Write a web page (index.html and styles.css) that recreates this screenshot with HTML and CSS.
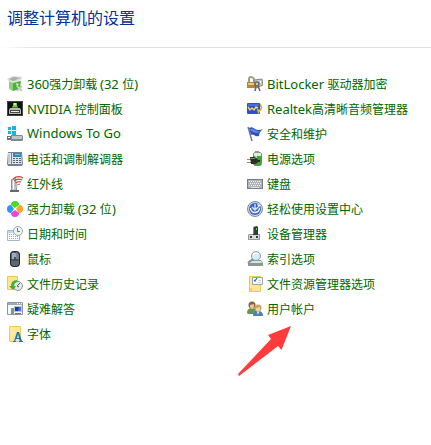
FILE: index.html
```html
<!DOCTYPE html>
<html lang="zh-CN">
<head>
    <meta charset="UTF-8">
    <meta name="viewport" content="width=device-width, initial-scale=1.0">
    <title>调整计算机的设置</title>
    <link rel="stylesheet" href="styles.css">
</head>
<body>
    <header class="page-header">
        <h1>调整计算机的设置</h1>
    </header>

    <main class="settings">
        <ul class="settings-list">
            <li><a href="#">
                <svg class="icon" viewBox="0 0 16 16"><path d="M0 3l6-3 9 1-1 3-9 2z" fill="#d3d9d0"/><path d="M2 3l5-2 6 1-7 3z" fill="#a3b59c"/><path d="M2 5l12-1-1 9-7 2-4-3z" fill="#4cb13a"/><path d="M2 5l4 1v9l-4-3z" fill="#8dcf7b"/><path d="M0 3l6 2 8-2v2L6 7 1 5z" fill="#dfe5dc"/><path d="M9 7l3 1-2 3z" fill="#d7f2cd"/><path d="M10 10l5 5m0-5l-5 5" stroke="#c3ccc1" stroke-width="2"/></svg>
                <span><span class="latin">360</span>强力卸载 <span class="latin">(32 </span>位<span class="latin">)</span></span>
            </a></li>
            <li><a href="#">
                <svg class="icon" viewBox="0 0 16 16"><path d="M0 0h16v15H0z" fill="#111"/><path d="M.5.5h15v14H.5z" fill="none" stroke="#454b43"/><path d="M3 7h10l1 2v4H2V9z" fill="#b5bab3"/><path d="M3 9h10v3H3z" fill="#424a41"/><path d="M4 10h8v1H4z" fill="#e9ece8"/><path d="M5 5h6v2H5z" fill="#3c7f20"/><path d="M6 2h4v4H6z" fill="#6fd335"/><path d="M7 2h2v2H7z" fill="#c7f5a6"/></svg>
                <span><span class="latin">NVIDIA </span>控制面板</span>
            </a></li>
            <li><a href="#">
                <svg class="icon" viewBox="0 0 16 16"><path d="M1 1h3v3H1zM5 0h4v4H5zM1 5h3v3H1zM5 5h4v4H5z" fill="#14b4ee"/><path d="M0 10h4v4H0z" fill="#687175"/><path d="M1 11h2v1H1z" fill="#fff"/><path d="M4 9h11l1 1v4l-1 1H4z" fill="#81898d"/><path d="M5 10h10v3H5z" fill="#bdc4c7"/></svg>
                <span class="latin">Windows To Go</span>
            </a></li>
            <li><a href="#">
                <svg class="icon" viewBox="0 0 16 16"><path d="M1 1h14l1 12-1 2H1l-1-2z" fill="#77838c"/><path d="M1 2h3v11H1z" fill="#e0e6e9"/><path d="M2 3v9" stroke="#a0abb3"/><path d="M5 2h9l1 11H5z" fill="#dce3e8"/><path d="M6 2h8v4H6z" fill="#3284b9"/><path d="M8 3h5v1H8z" fill="#77c5e8"/><path d="M6 7.500h8M6 9.500h8M6 11.500h8" stroke="#59646d" stroke-dasharray="2 1"/></svg>
                <span>电话和调制解调器</span>
            </a></li>
            <li><a href="#">
                <svg class="icon" viewBox="0 0 16 16"><path d="M4.500 3.500l4-1 1 12h-5z" fill="#c6cbce" stroke="#8a9195"/><path d="M6 4h1v9H6z" fill="#fff"/><path d="M3 14h9v2H3z" fill="#626a6e"/><path d="M6 3q5-4 10-1M7 5q4-3 8-1M9 7q2-2 5-1" fill="none" stroke="#c04746" stroke-width="1.2"/><path d="M10 9l3-1" stroke="#d35f5d"/></svg>
                <span>红外线</span>
            </a></li>
            <li><a href="#">
                <svg class="icon" viewBox="0 0 16 16"><path d="M8 7L4 4Q4 0 8 0t4 4z" fill="#45dc22"/><path d="M9 8l3-4q4 0 4 4t-4 4z" fill="#ffa326"/><path d="M8 9l4 3q0 4-4 4t-4-4z" fill="#ee42dc"/><path d="M7 8l-3 4q-4 0-4-4t4-4z" fill="#2599f4"/></svg>
                <span>强力卸载 <span class="latin">(32 </span>位<span class="latin">)</span></span>
            </a></li>
            <li><a href="#">
                <svg class="icon" viewBox="0 0 16 16"><path d="M.5 4.500h12v10H.5z" fill="#f7fbfc" stroke="#a7b9c1"/><path d="M1 5h11v2H1z" fill="#b5dcea"/><path d="M2 8.500h9M2 10.500h9M2 12.500h9" stroke="#8fb2bf" stroke-dasharray="1 1"/><circle cx="11" cy="5" r="4.500" fill="#edf3f5" stroke="#9ba9b0"/><path d="M10.500 2v3.500H13" fill="none" stroke="#607b88"/></svg>
                <span>日期和时间</span>
            </a></li>
            <li><a href="#">
                <svg class="icon" viewBox="0 0 16 16"><rect x="3" y="0" width="10" height="16" rx="4" fill="#20262e"/><rect x="4" y="1" width="8" height="14" rx="3" fill="#5e6875"/><path d="M5 2h2v6H5z" fill="#a4adb7"/><path d="M9 1q3 1 3 7H9z" fill="#7d8793"/><path d="M4 9h8M8 1v8" stroke="#343d48"/><path d="M8 2v4" stroke="#85aedb" stroke-width="2"/></svg>
                <span>鼠标</span>
            </a></li>
            <li><a href="#">
                <svg class="icon" viewBox="0 0 16 16"><path d="M.5.5h10v13H.5z" fill="#ffe493" stroke="#edc95d"/><circle cx="11" cy="10" r="4.500" fill="#e2e7e7" stroke="#8c9696"/><path d="M10 10l3-3M10 10l2 1" stroke="#53615f"/><path d="M10 4Q4 4 4 10H2l4 4 3-4H7q0-4 3-4z" fill="#43b52b"/></svg>
                <span>文件历史记录</span>
            </a></li>
            <li><a href="#">
                <svg class="icon" viewBox="0 0 16 16"><path d="M.5 1.500h15v12H.5z" fill="#f5f7f8" stroke="#8e979d"/><path d="M1 2h14v2H1z" fill="#a0abb6"/><path d="M10 2h1v1h-1zM12 2h1v1h-1zM14 2h1v1h-1z" fill="#fff"/><path d="M4 7h3v6H4z" fill="#8b949b"/><path d="M5 8h1v2H5z" fill="#4ebc41"/><path d="M7 5h8v6H7z" fill="#bbc5d7"/><path d="M8 6h6v4H8z" fill="#1732bf"/><path d="M12 6h2v4h-3z" fill="#4b72df"/><path d="M8 12.500h6" stroke="#65717e"/></svg>
                <span>疑难解答</span>
            </a></li>
            <li><a href="#">
                <svg class="icon" viewBox="0 0 16 16"><path d="M2.500.5h11v15h-11z" fill="#ffe79b" stroke="#f2ca51"/><path d="M10 6h2l3 9h1v1h-4v-1h1l-1-2H9l-1 2h1v1H6v-1h1zm1 2l-1 4h2z" fill="#1777b5"/></svg>
                <span>字体</span>
            </a></li>
        </ul>

        <ul class="settings-list">
            <li><a href="#">
                <svg class="icon" viewBox="0 0 16 16"><path d="M2 7V3q0-2 2-2t3 2v4" fill="none" stroke="#a59b82" stroke-width="2"/><path d="M7 4l8-1 1 6-7 3z" fill="#c5c9c7" stroke="#858a86"/><path d="M0 6h8v6H0z" fill="#b48830"/><path d="M1 7h6v2H1z" fill="#e8c87d"/><circle cx="10" cy="8" r="2" fill="none" stroke="#6e6758" stroke-width="1.4"/><path d="M9 10l-1 5M11 10l2 5" stroke="#746b56" stroke-width="1.6"/><path d="M13 5h1v2h-1z" fill="#fff"/></svg>
                <span><span class="latin">BitLocker </span>驱动器加密</span>
            </a></li>
            <li><a href="#">
                <svg class="icon" viewBox="0 0 16 16"><path d="M12 2q4 1 3 6l-3 4z" fill="#f2cd79"/><path d="M13 3q3 3 0 7" fill="none" stroke="#c99843"/><rect y="2" width="13" height="11" rx="1" fill="#2c4fca"/><path d="M1 3h11v2H1z" fill="#4c6dd8"/><path d="M1 6l2 3 2-2 2 2 2-3 2 1" fill="none" stroke="#f0d957" stroke-width="1.400"/><path d="M10 8l4 1-3 4z" fill="#ecb844"/></svg>
                <span><span class="latin">Realtek</span>高清晰音频管理器</span>
            </a></li>
            <li><a href="#">
                <svg class="icon" viewBox="0 0 16 16"><path d="M1 1l4 14" stroke="#6b7593" stroke-width="1.400"/><path d="M2 2q3-2 6 1 3 2 8 0-4 3-4 7-3 1-5-1-2-1-3 0z" fill="#2c53be"/><path d="M3 3q3-1 5 1 3 2 5 1l-2 2Q7 7 4 5z" fill="#6288dc"/></svg>
                <span>安全和维护</span>
            </a></li>
            <li><a href="#">
                <svg class="icon" viewBox="0 0 16 16"><rect x="6.500" y="1.500" width="8" height="13" rx="2" fill="#3ca832" stroke="#75816f"/><path d="M8 0h4v2H8z" fill="#929c91"/><path d="M7 2h7v3H7z" fill="#e0ebdd"/><path d="M8 5h2v7H8z" fill="#a5e493"/><path d="M0 8.500h4M0 11.500h4" stroke="#a58f48"/><path d="M3 6h4q4 1 4 4t-4 3H4z" fill="#293029"/><path d="M4 7h3l2 1H4z" fill="#889086"/><path d="M10 10h3" stroke="#252d25" stroke-width="2"/></svg>
                <span>电源选项</span>
            </a></li>
            <li><a href="#">
                <svg class="icon" viewBox="0 0 16 16"><path d="M0 3h16v10H0z" fill="#777f85"/><path d="M1 4h14v8H1z" fill="#aeb4b8"/><path d="M2 5.500h12M2 9.500h12" stroke="#f2f4f4" stroke-dasharray="1 1"/><path d="M3 7.500h11" stroke="#f2f4f4" stroke-dasharray="1 1"/><path d="M4 11.500h8" stroke="#e2e5e6"/></svg>
                <span>键盘</span>
            </a></li>
            <li><a href="#">
                <svg class="icon" viewBox="0 0 16 16"><circle cx="8" cy="8" r="7.500" fill="#d1d7e0" stroke="#818b9c"/><circle cx="8" cy="8" r="6" fill="#3365c5"/><path d="M3.500 7a4.500 4.500 0 1 0 9 0" fill="none" stroke="#f5f8ff" stroke-width="1.400"/><path d="M8 3v6M5 6l3 3 3-3" fill="none" stroke="#dce7ff" stroke-width="1.300"/><path d="M10 3l3 1-1 3z" fill="#fff"/></svg>
                <span>轻松使用设置中心</span>
            </a></li>
            <li><a href="#">
                <svg class="icon" viewBox="0 0 16 16"><path d="M6 1l4-1 1 1v8H6z" fill="#343b3f"/><path d="M6 1h1v7H6z" fill="#7d868a"/><path d="M9 2h1v2H9z" fill="#4dd54a"/><path d="M2 8h4v1h5V8h2v6H1V9z" fill="#92999d"/><path d="M2 9h10v4H2z" fill="#d8dcde"/><path d="M3 10h2v2H3zM9 10h2v2H9z" fill="#343b3e"/></svg>
                <span>设备管理器</span>
            </a></li>
            <li><a href="#">
                <svg class="icon" viewBox="0 0 16 16"><path d="M3 9h11l2 3v3H1v-4z" fill="#8c969c"/><path d="M3 10h11l1 2H2z" fill="#dce1e3"/><circle cx="9" cy="5" r="4.500" fill="#d4edf7" stroke="#929da4"/><path d="M6 4q2-3 5-1" fill="none" stroke="#fff" stroke-width="1.500"/><path d="M6 8l-5 4" stroke="#858f95" stroke-width="2"/><path d="M13 13h1v1h-1z" fill="#48d045"/></svg>
                <span>索引选项</span>
            </a></li>
            <li><a href="#">
                <svg class="icon" viewBox="0 0 16 16"><path d="M2.500.5h11v15h-11z" fill="#ffe69b" stroke="#edc75c"/><path d="M3 12h2v3H3z" fill="#f5cf64"/><path d="M5.500 1.500h10v7h-10z" fill="#fff" stroke="#9aa3ac"/><path d="M7 4l1 1 2-3" fill="none" stroke="#2875c0" stroke-width="1.300"/><path d="M11 4.500h3M11 6.500h3" stroke="#c9cfd4"/></svg>
                <span>文件资源管理器选项</span>
            </a></li>
            <li><a href="#">
                <svg class="icon" viewBox="0 0 16 16"><path d="M0 12q0-5 5-5t5 5l-2 1H1z" fill="#669653"/><circle cx="5" cy="4" r="3.500" fill="#84653b"/><path d="M3 4l4-1v3q-1 2-2 2T3 6z" fill="#efc49a"/><path d="M6 15q0-5 5-5t5 5H6z" fill="#4a80b6"/><circle cx="11" cy="7" r="3.500" fill="#c7a45c"/><path d="M9 7l4-1v3q-1 2-2 2T9 9z" fill="#f4d0a5"/><path d="M10 11h2l-1 3z" fill="#e8f2fa"/></svg>
                <span>用户帐户</span>
            </a>
                <svg class="pointer" viewBox="0 0 54 51"><path d="M53 0L43.500 24 40 20 1 50 0 48 33 13 30 9z" fill="#ff3b3b"/></svg>
            </li>
        </ul>
    </main>
</body>
</html>
```

FILE: styles.css
```css
* {
    margin: 0;
    padding: 0;
    box-sizing: border-box;
}

body {
    min-height: 100vh;
    background: #fff;
    font-family: "Noto Sans CJK SC", sans-serif;
    font-size: 12px;
    color: #006600;
}

.page-header {
    padding: 5px 7px 18px;
    border-bottom: 1px solid;
    border-image: linear-gradient(to right, #fff, #d9e3ee 40px) 1;
}

.page-header h1 {
    font-size: 16px;
    font-weight: 400;
    line-height: 24px;
    color: #003399;
}

.settings {
    display: grid;
    grid-template-columns: 240px 1fr;
    padding: 23px 0 64px 7px;
}

.settings-list {
    list-style: none;
}

.settings-list li {
    position: relative;
    height: 25px;
}

.settings-list a {
    display: flex;
    align-items: center;
    gap: 4px;
    height: 25px;
    line-height: 25px;
    color: #006600;
    text-decoration: none;
    white-space: nowrap;
}

.settings-list a:hover {
    text-decoration: underline;
}

.latin {
    font-family: "Noto Sans", sans-serif;
    font-size: 13px;
}

.icon {
    width: 16px;
    height: 16px;
    flex-shrink: 0;
}

/* red arrow under the user accounts entry */
.pointer {
    position: absolute;
    top: 30px;
    left: -9px;
    width: 54px;
    height: 51px;
    pointer-events: none;
}
```
